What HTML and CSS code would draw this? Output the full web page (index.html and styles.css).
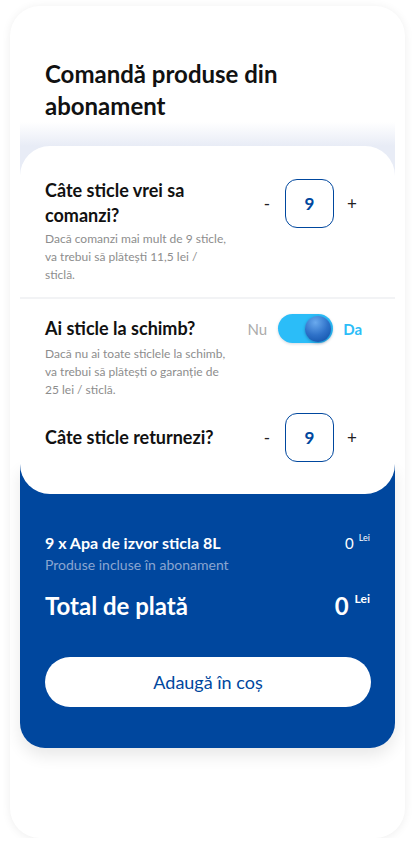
FILE: index.html
```html
<!DOCTYPE html>
<html lang="ro">
<head>
<meta charset="utf-8">
<title>Comandă produse din abonament</title>
<link rel="stylesheet" href="styles.css">
</head>
<body>
<div class="sheet">
  <h1 class="title">Comandă produse din abonament</h1>
  <div class="panel-wrap">
    <div class="card">
      <div class="section first">
        <div class="row">
          <h2 class="q q-wrap">Câte sticle vrei sa comanzi?</h2>
          <div class="stepper">
            <span class="step">-</span>
            <span class="qty">9</span>
            <span class="step">+</span>
          </div>
        </div>
        <p class="desc">Dacă comanzi mai mult de 9 sticle, va trebui să plătești 11,5 lei / sticlă.</p>
      </div>
      <div class="divider"></div>
      <div class="section second">
        <div class="row">
          <h2 class="q">Ai sticle la schimb?</h2>
          <div class="switch-group">
            <span class="opt-no">Nu</span>
            <span class="switch"><span class="knob"></span></span>
            <span class="opt-yes">Da</span>
          </div>
        </div>
        <p class="desc">Dacă nu ai toate sticlele la schimb, va trebui să plătești o garanție de 25 lei / sticlă.</p>
        <div class="row row-return">
          <h2 class="q">Câte sticle returnezi?</h2>
          <div class="stepper">
            <span class="step">-</span>
            <span class="qty">9</span>
            <span class="step">+</span>
          </div>
        </div>
      </div>
    </div>
    <div class="summary">
      <div class="line">
        <span class="item">9 x Apa de izvor sticla 8L</span>
        <span class="price">0<sup class="cur">Lei</sup></span>
      </div>
      <div class="note">Produse incluse în abonament</div>
      <div class="line total">
        <span class="total-label">Total de plată</span>
        <span class="price big">0<sup class="cur">Lei</sup></span>
      </div>
      <button class="cta" type="button">Adaugă în coș</button>
    </div>
  </div>
</div>
</body>
</html>
```

FILE: styles.css
```css
* { box-sizing: border-box; }
html, body { margin: 0; padding: 0; background: #ffffff; }
body { font-family: Lato, "Open Sans", "Noto Sans", sans-serif; color: #111111; }

.sheet {
  width: 395px;
  height: 832px;
  margin: 6px 10px 0 10px;
  border-radius: 30px;
  background: #ffffff;
  box-shadow: 0 1px 10px rgba(0, 0, 0, 0.07);
  padding-top: 52px;
  overflow: hidden;
}

.title {
  margin: 0;
  padding: 0 35px;
  font-size: 24px;
  line-height: 32px;
  font-weight: 700;
  color: #111111;
}

.panel-wrap {
  margin: 0 10px;
  padding-top: 24px;
  background-image: linear-gradient(to bottom, rgba(233, 237, 247, 0) 0, #e8ecf6 24px, #e8ecf6 100%);
  background-repeat: no-repeat;
  background-size: 100% 70px;
}

.card {
  position: relative;
  z-index: 1;
  background: #ffffff;
  border-radius: 30px;
  padding: 0 33px 32px 25px;
}

.section.first { padding-top: 32px; padding-bottom: 13px; }
.section.second { padding-top: 15px; }

.divider {
  height: 2px;
  background: #f2f3f5;
  margin: 0 -33px 0 -25px;
}

.row {
  display: flex;
  align-items: center;
  justify-content: space-between;
}

.row-return { margin-top: 14px; }

.q {
  margin: 0;
  font-size: 18px;
  line-height: 25px;
  font-weight: 700;
  color: #111111;
}

.q-wrap { max-width: 190px; }

.desc {
  margin: 2px 0 0 0;
  max-width: 182px;
  font-size: 12px;
  line-height: 18px;
  color: #8d8d8d;
}

.stepper {
  display: flex;
  align-items: center;
  gap: 8px;
}

.step {
  width: 20px;
  text-align: center;
  font-size: 17px;
  color: #222222;
}

.qty {
  width: 49px;
  height: 49px;
  border: 1px solid #00479e;
  border-radius: 12px;
  display: flex;
  align-items: center;
  justify-content: center;
  font-size: 17px;
  font-weight: 700;
  color: #00479e;
}

.switch-group {
  display: flex;
  align-items: center;
}

.opt-no {
  font-size: 15px;
  color: #ababab;
  margin-right: 11px;
}

.switch {
  width: 55px;
  height: 29px;
  border-radius: 15px;
  background: #2bbdf8;
  box-shadow: 0 1px 3px rgba(0, 40, 90, 0.18);
  display: flex;
  align-items: center;
  justify-content: flex-end;
  padding-right: 2px;
}

.knob {
  width: 26px;
  height: 26px;
  border-radius: 50%;
  background: radial-gradient(circle at 40% 25%, #6aaaee 0, #2f72c9 50%, #0b4ba3 100%);
  box-shadow: 0 1px 3px rgba(0, 30, 80, 0.35);
}

.opt-yes {
  margin-left: 10px;
  font-size: 15px;
  font-weight: 700;
  color: #2bbdf8;
}

.summary {
  margin-top: -30px;
  background: #00479e;
  border-radius: 0 0 25px 25px;
  padding: 69px 24px 41px 25px;
  color: #ffffff;
  box-shadow: 0 8px 16px rgba(0, 0, 0, 0.09);
}

.line {
  display: flex;
  justify-content: space-between;
  align-items: flex-start;
}

.item {
  font-size: 16px;
  line-height: 20px;
  font-weight: 700;
}

.price {
  font-size: 15px;
  line-height: 20px;
  margin-right: 1px;
}

.cur {
  font-size: 9px;
  line-height: 1;
  vertical-align: 8px;
  margin-left: 5px;
}

.note {
  margin-top: 2px;
  font-size: 14px;
  line-height: 20px;
  color: #8aa5d0;
}

.total { margin-top: 16px; }

.total-label {
  font-size: 24px;
  line-height: 30px;
  font-weight: 700;
}

.price.big {
  font-size: 24px;
  line-height: 30px;
  font-weight: 700;
}

.price.big .cur {
  font-size: 12px;
  vertical-align: 12px;
  margin-left: 6px;
}

.cta {
  display: block;
  width: 100%;
  height: 50px;
  margin-top: 36px;
  border: 0;
  border-radius: 25px;
  background: #ffffff;
  color: #00479e;
  font-family: Lato, "Open Sans", "Noto Sans", sans-serif;
  font-size: 18px;
}
```
